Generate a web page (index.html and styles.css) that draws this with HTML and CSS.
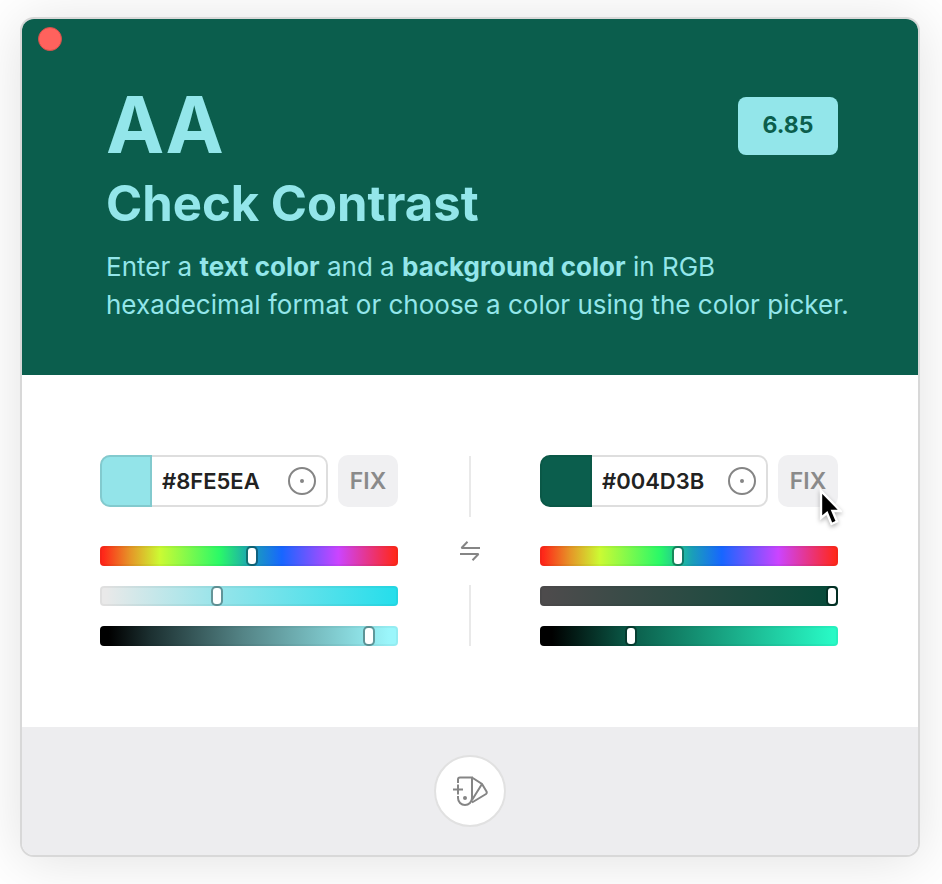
FILE: index.html
```html
<!DOCTYPE html>
<html lang="en">
<head>
<meta charset="utf-8">
<meta name="viewport" content="width=device-width, initial-scale=1">
<title>Check Contrast</title>
<link rel="stylesheet" href="styles.css">
</head>
<body>
<main class="window">
  <header class="hero">
    <button class="close" type="button" aria-label="Close"></button>
    <div class="summary">
      <div class="grade">AA</div>
      <output class="ratio">6.85</output>
    </div>
    <h1 class="title">Check Contrast</h1>
    <p class="intro">Enter a <strong>text color</strong> and a <strong>background color</strong> in RGB hexadecimal format or choose a color using the color picker.</p>
  </header>

  <div class="controls">
    <section class="color" aria-label="Text color">
      <div class="entry">
        <div class="field">
          <span class="swatch swatch-text"></span>
          <input class="hex" type="text" value="#8FE5EA" aria-label="Text color hex">
          <button class="picker" type="button" aria-label="Pick text color">
            <svg class="picker-icon" viewBox="0 0 28 28"><circle cx="14" cy="14" r="13" fill="none" stroke="currentColor" stroke-width="2"/><circle cx="14" cy="14" r="2" fill="currentColor"/></svg>
          </button>
        </div>
        <button class="fix" type="button">FIX</button>
      </div>
      <input class="slider hue" type="range" min="0" max="1000" value="510" aria-label="Text hue">
      <input class="slider text-saturation" type="range" min="0" max="1000" value="388" aria-label="Text saturation">
      <input class="slider text-brightness" type="range" min="0" max="1000" value="921" aria-label="Text brightness">
    </section>

    <div class="divider">
      <span class="rule"></span>
      <button class="swap" type="button" aria-label="Swap colors">
        <svg class="swap-icon" viewBox="0 0 20 20" fill="none" stroke="currentColor" stroke-width="2" stroke-linejoin="bevel"><path d="M20 7H1.5L7.5 0.8M0 13H18.500L12.500 19.200"/></svg>
      </button>
      <span class="rule"></span>
    </div>

    <section class="color" aria-label="Background color">
      <div class="entry">
        <div class="field">
          <span class="swatch swatch-background"></span>
          <input class="hex" type="text" value="#004D3B" aria-label="Background color hex">
          <button class="picker" type="button" aria-label="Pick background color">
            <svg class="picker-icon" viewBox="0 0 28 28"><circle cx="14" cy="14" r="13" fill="none" stroke="currentColor" stroke-width="2"/><circle cx="14" cy="14" r="2" fill="currentColor"/></svg>
          </button>
        </div>
        <div class="fix-wrap">
          <button class="fix" type="button">FIX</button>
          <svg class="cursor" viewBox="0 0 24 38" aria-hidden="true"><path d="M3 3V30L9 25L13.500 36L19 33.500L14.500 23H22.500Z" fill="#000" stroke="#fff" stroke-width="2.400"/></svg>
        </div>
      </div>
      <input class="slider hue" type="range" min="0" max="1000" value="462" aria-label="Background hue">
      <input class="slider background-saturation" type="range" min="0" max="1000" value="1000" aria-label="Background saturation">
      <input class="slider background-brightness" type="range" min="0" max="1000" value="297" aria-label="Background brightness">
    </section>
  </div>

  <footer class="footer">
    <button class="save" type="button" aria-label="Add to palette">
      <svg class="save-icon" viewBox="0 0 36 32" fill="none" stroke="currentColor" stroke-width="2"><path d="M6 8V4.500Q6 2.500 8 2.500H20V23A7 7 0 0 1 6 23V21M1 14.500H11M6 9.500V19.500M20 2.500L30 9L34.500 16.500Q35.200 18 34 19L20 27.500M30 9L20 25"/><circle cx="13" cy="23" r="2" fill="currentColor" stroke="none"/></svg>
    </button>
  </footer>
</main>
</body>
</html>
```
FILE: styles.css
```css
* {
  box-sizing: border-box;
}

body {
  margin: 0;
  padding: 17px 22px 27px 20px;
  background: #fff;
  font-family: Inter, "Liberation Sans", sans-serif;
}

button {
  padding: 0;
  border: 0;
  font: inherit;
}

svg {
  display: block;
}

.window {
  border: 2px solid #d8d8d8;
  border-radius: 14px;
  overflow: hidden;
  background: #fff;
  box-shadow: 0 4px 56px rgba(0, 0, 0, 0.12);
}

.hero {
  padding: 8px 64px 51px 84px;
  background: #0b5e4d;
  color: #93e6ea;
}

.close {
  display: block;
  width: 24px;
  height: 24px;
  margin-left: -68px;
  border: 1px solid #d3504a;
  border-radius: 50%;
  background: #ff625d;
}

.summary {
  display: flex;
  justify-content: space-between;
  align-items: flex-start;
  padding: 26px 16px 0 0;
}

.grade {
  height: 93px;
  font-size: 78px;
  line-height: 95px;
  font-weight: 700;
}

.ratio {
  width: 100px;
  height: 58px;
  margin-top: 20px;
  border-radius: 8px;
  background: #93e6ea;
  color: #0b5e4d;
  font-size: 23px;
  line-height: 56px;
  font-weight: 700;
  text-align: center;
}

.title {
  margin: 0;
  font-size: 49px;
  line-height: 68px;
  font-weight: 700;
}

.intro {
  margin: 10px 0 0;
  font-size: 26px;
  line-height: 38px;
}

.controls {
  display: grid;
  grid-template-columns: minmax(0, 1fr) 142px minmax(0, 1fr);
  padding: 80px 80px 81px 78px;
}

.color {
  display: flex;
  flex-direction: column;
  gap: 20px;
}

.entry {
  display: flex;
  gap: 10px;
  margin-bottom: 19px;
}

.field {
  display: flex;
  flex: 1;
  align-items: center;
  min-width: 0;
  height: 52px;
  padding-right: 12px;
  border-radius: 10px;
  box-shadow: inset 0 0 0 2px #dedede;
}

.swatch {
  flex: none;
  width: 52px;
  height: 52px;
  border: 2px solid;
  border-radius: 10px 0 0 10px;
}

.swatch-text {
  background: #93e4e9;
  border-color: #82cace;
}

.swatch-background {
  background: #0b5e4d;
  border-color: #0a5847;
}

.hex {
  flex: 1;
  min-width: 0;
  padding: 0 0 0 10px;
  border: 0;
  background: none;
  color: #222;
  font: 600 22px/28px Inter, "Liberation Sans", sans-serif;
}

.picker {
  background: none;
  color: #858585;
}

.picker-icon {
  width: 28px;
  height: 28px;
}

.fix-wrap {
  position: relative;
}

.fix {
  width: 60px;
  height: 52px;
  border-radius: 10px;
  background: #f0f0f2;
  color: #8a8a8a;
  font-size: 23px;
  font-weight: 600;
}

.cursor {
  position: absolute;
  top: 33px;
  left: 40px;
  width: 24px;
  height: 38px;
  filter: drop-shadow(0 2px 2px rgba(0, 0, 0, 0.3));
}

.slider {
  appearance: none;
  width: 100%;
  height: 20px;
  margin: 0;
  border-radius: 4px;
  box-shadow: inset 0 0 0 2px rgba(0, 0, 0, 0.04);
}

.slider::-webkit-slider-thumb {
  appearance: none;
  width: 12px;
  height: 20px;
  border: 2px solid rgba(0, 0, 0, 0.35);
  border-radius: 5px;
  background: #fff padding-box;
}

.hue {
  background: linear-gradient(90deg, #ff2719 1%, #e69427 10%, #ccfa33 20%, #2bf967 40%, #1a9fb8 51%, #1766ff 61%, #cb44ff 80%, #ff281d 99%);
}

.text-saturation {
  background: linear-gradient(90deg, #e9e9e9 2%, #92e4ea 42%, #26deeb 99%);
}

.text-brightness {
  background: linear-gradient(90deg, #000 3%, #1c3031 17%, #548486 48%, #9bf6fb 97%);
}

.background-saturation {
  background: linear-gradient(90deg, #4d4b4c 2%, #064b3a 99%);
}

.background-brightness {
  background: linear-gradient(90deg, #000 4%, #0b5e4b 31%, #28f9c5 98%);
}

.divider {
  display: flex;
  flex-direction: column;
  align-items: center;
  justify-content: space-between;
  padding: 1px 0 0 2px;
}

.rule {
  width: 2px;
  height: 61px;
  background: #e9e9e9;
}

.swap {
  background: none;
  color: #858585;
}

.swap-icon {
  width: 20px;
  height: 20px;
}

.footer {
  display: flex;
  justify-content: center;
  padding: 28px;
  background: #ededef;
}

.save {
  display: grid;
  place-items: center;
  width: 72px;
  height: 72px;
  border: 2px solid #e1e1e1;
  border-radius: 50%;
  background: #fff;
  color: #858585;
}

.save-icon {
  width: 36px;
  height: 32px;
}
```
